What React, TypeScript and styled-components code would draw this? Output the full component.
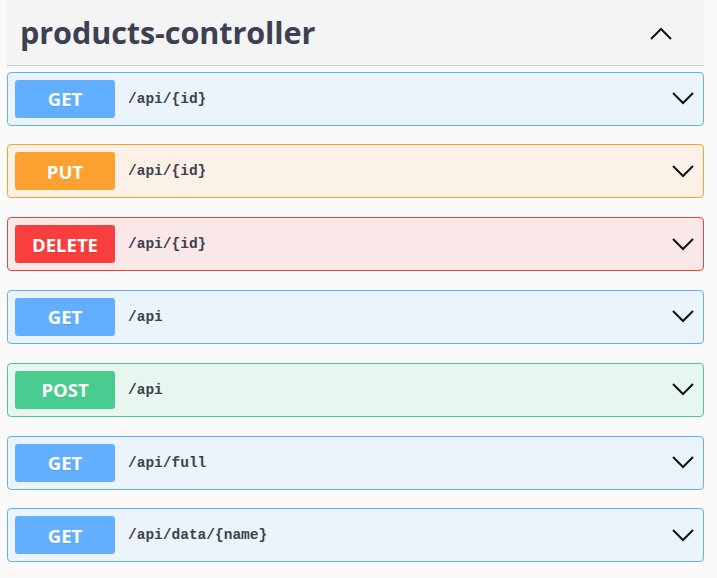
import React from "react";
import styled, { createGlobalStyle } from "styled-components";

const Global = createGlobalStyle`
  html, body { margin: 0; padding: 0; background: #fafafa; }
  body { font-family: "Open Sans", "Noto Sans", sans-serif; }
`;

const Page = styled.div`
  width: 697px;
  padding: 0 0 0 7px;
  box-sizing: content-box;
`;

const Header = styled.div`
  height: 66px;
  box-sizing: border-box;
  background: #f4f4f4;
  border-bottom: 1px solid #c9cacd;
  display: flex;
  align-items: center;
  justify-content: space-between;
  padding: 2px 32px 0 13px;
  margin-bottom: 5.5px;
`;

const Title = styled.h3`
  margin: 0;
  font-family: "Open Sans", "Noto Sans", sans-serif;
  font-weight: 700;
  font-size: 30.6px;
  letter-spacing: -0.1px;
  color: #3b4151;
  line-height: 1;
  padding-bottom: 2px;
`;

const List = styled.div`
  display: flex;
  flex-direction: column;
  gap: 18.83px;
`;

type Kind = "get" | "put" | "delete" | "post";
const colors: Record<Kind, { main: string; bg: string }> = {
  get: { main: "#61affe", bg: "#ebf3fb" },
  put: { main: "#fca130", bg: "#fbf1e6" },
  delete: { main: "#f93e3e", bg: "#fae7e7" },
  post: { main: "#49cc90", bg: "#e8f6f0" },
};

const Row = styled.div<{ $kind: Kind }>`
  height: 54px;
  box-sizing: border-box;
  border: 1px solid ${(p) => colors[p.$kind].main};
  background: ${(p) => colors[p.$kind].bg};
  border-radius: 4px;
  padding: 7px 9px 7px 7px;
  display: flex;
  align-items: center;
`;

const Badge = styled.span<{ $kind: Kind }>`
  width: 100px;
  height: 38px;
  flex: none;
  border-radius: 3px;
  background: ${(p) => colors[p.$kind].main};
  color: #fff;
  font-family: "Open Sans", "Noto Sans", sans-serif;
  font-weight: 700;
  font-size: 18.5px;
  display: flex;
  align-items: center;
  justify-content: center;
  text-shadow: 0 1px 0 rgba(0, 0, 0, 0.1);
`;

const Path = styled.span`
  margin-left: 13px;
  flex: 1;
  font-family: "Liberation Mono", "DejaVu Sans Mono", monospace;
  font-weight: 700;
  font-size: 14.5px;
  color: #3b4151;
`;

const Chevron = ({ up }: { up?: boolean }) => (
  <svg width="22" height="13" viewBox="0 0 22 13" fill="none">
    <path
      d={up ? "M1 12 L11 2 L21 12" : "M1 1 L11 11 L21 1"}
      stroke="#111"
      strokeWidth="2"
    />
  </svg>
);

const ops: { kind: Kind; label: string; path: string }[] = [
  { kind: "get", label: "GET", path: "/api/{id}" },
  { kind: "put", label: "PUT", path: "/api/{id}" },
  { kind: "delete", label: "DELETE", path: "/api/{id}" },
  { kind: "get", label: "GET", path: "/api" },
  { kind: "post", label: "POST", path: "/api" },
  { kind: "get", label: "GET", path: "/api/full" },
  { kind: "get", label: "GET", path: "/api/data/{name}" },
];

export default function App() {
  return (
    <>
      <Global />
      <Page>
        <Header>
          <Title>products-controller</Title>
          <Chevron up />
        </Header>
        <List>
          {ops.map((o, i) => (
            <Row key={i} $kind={o.kind}>
              <Badge $kind={o.kind}>{o.label}</Badge>
              <Path>{o.path}</Path>
              <Chevron />
            </Row>
          ))}
        </List>
      </Page>
    </>
  );
}
